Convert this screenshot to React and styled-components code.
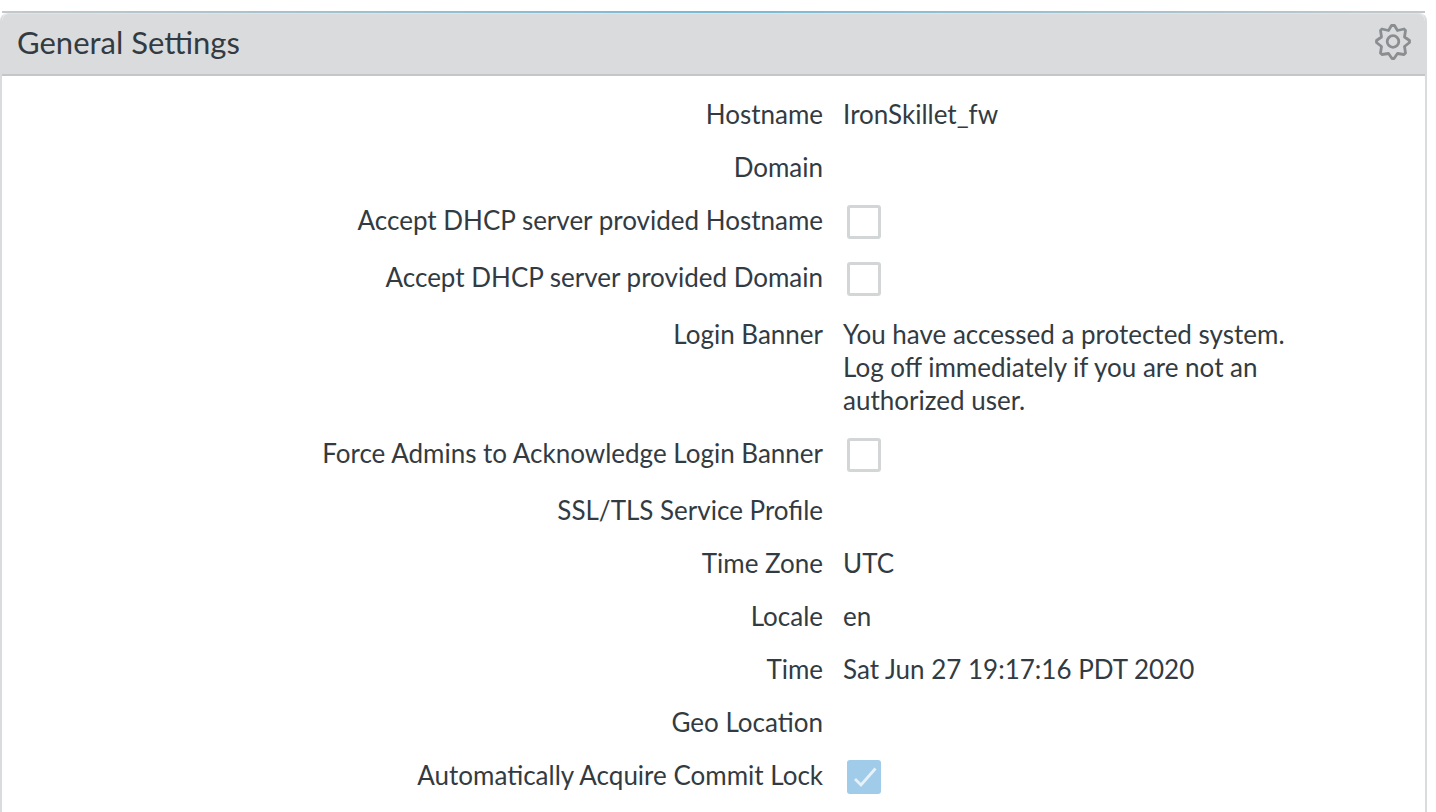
import React, { useState } from "react";
import styled, { createGlobalStyle } from "styled-components";

const GlobalStyle = createGlobalStyle`
  *, *::before, *::after { box-sizing: border-box; }
  body {
    margin: 0;
    background: #ffffff;
    color: #333b42;
    font-family: Lato, "Liberation Sans", sans-serif;
  }
`;

const Page = styled.main`
  padding: 11px 9px 0 0;
`;

const AccentLine = styled.div`
  height: 2px;
  margin: 0 2px;
  background: linear-gradient(to right, #c4c8cb 0%, #78bad3 50%, #c4c8cb 100%);
`;

const Panel = styled.section`
  border: 2px solid #dadbdd;
  border-top: 0;
  border-bottom: 0;
  border-radius: 8px 8px 0 0;
`;

const PanelHeader = styled.header`
  display: flex;
  align-items: center;
  justify-content: space-between;
  height: 63px;
  padding: 0 14px 3px 15px;
  background: #dadbdd;
  border-bottom: 2px solid #c4c6c9;
  border-radius: 8px 8px 0 0;
  box-shadow: inset 0 1px 0 #e2e3e5;
`;

const Title = styled.h1`
  margin: 0;
  font-size: 31px;
  line-height: 38px;
  font-weight: 400;
`;

const IconButton = styled.button`
  display: flex;
  padding: 0;
  border: 0;
  background: none;
  color: #8b8e91;
  cursor: pointer;
`;

const Settings = styled.div`
  display: flex;
  flex-direction: column;
  gap: 20px;
  padding: 22px 57px 24px 0;
`;

const Row = styled.div`
  display: grid;
  grid-template-columns: 61fr 39fr;
  column-gap: 20px;
  font-size: 26px;
  line-height: 33px;
`;

const Name = styled.span`
  text-align: right;
`;

const Value = styled.span`
  min-width: 0;
  max-width: 470px;
`;

const BoxFrame = styled.span`
  display: grid;
  width: 34px;
  margin: 1px 0 2px 4px;

  & > * { grid-area: 1 / 1; }
`;

const Checkbox = styled.input`
  appearance: none;
  width: 34px;
  height: 34px;
  margin: 0;
  border: 3px solid #d3d6d7;
  border-radius: 3px;
  background: #ffffff;

  &:checked {
    border-color: #a0cbe9;
    background: #a0cbe9;
  }
`;

const Tick = styled.svg`
  pointer-events: none;
`;

function GearIcon() {
  return (
    <svg width="36" height="36" viewBox="0 0 36 36" fill="none" stroke="currentColor" strokeWidth="2.8" strokeLinejoin="round" aria-hidden="true">
      <path d="M16.500 1.500h3L22.500 6.500 29 5 30.500 6.500 29.500 13 34.500 16.500v2L29.500 22.500 30.500 29 29 30.500 22.500 29.500 19 34.500h-2L13.500 29.500 7 30.500 5.500 29 6.500 22.500 1.500 18.500v-2L6.500 13 5.500 6.500 7 5 13.500 6.500z" />
      <circle cx="18" cy="17.500" r="5.800" />
    </svg>
  );
}

const SETTINGS = [
  { name: "Hostname", value: "IronSkillet_fw" },
  { name: "Domain", value: "" },
  { name: "Accept DHCP server provided Hostname", checked: false },
  { name: "Accept DHCP server provided Domain", checked: false },
  {
    name: "Login Banner",
    value: "You have accessed a protected system. Log off immediately if you are not an authorized user.",
  },
  { name: "Force Admins to Acknowledge Login Banner", checked: false },
  { name: "SSL/TLS Service Profile", value: "" },
  { name: "Time Zone", value: "UTC" },
  { name: "Locale", value: "en" },
  { name: "Time", value: "Sat Jun 27 19:17:16 PDT 2020" },
  { name: "Geo Location", value: "" },
  { name: "Automatically Acquire Commit Lock", checked: true },
];

function ToggleRow({ name, initial, id }) {
  const [on, setOn] = useState(initial);
  return (
    <Row>
      <Name as="label" htmlFor={id}>{name}</Name>
      <BoxFrame>
        <Checkbox id={id} type="checkbox" checked={on} onChange={(e) => setOn(e.target.checked)} />
        {on && (
          <Tick width="34" height="34" viewBox="0 0 34 34" fill="none" stroke="#e6f1fa" strokeWidth="2.800" aria-hidden="true">
            <path d="M8 19l6 6L28.500 8.500" />
          </Tick>
        )}
      </BoxFrame>
    </Row>
  );
}

export default function App() {
  return (
    <Page>
      <GlobalStyle />
      <AccentLine />
      <Panel>
        <PanelHeader>
          <Title>General Settings</Title>
          <IconButton type="button" aria-label="Edit general settings">
            <GearIcon />
          </IconButton>
        </PanelHeader>
        <Settings>
          {SETTINGS.map((s, i) =>
            s.checked === undefined ? (
              <Row key={s.name}>
                <Name>{s.name}</Name>
                <Value>{s.value}</Value>
              </Row>
            ) : (
              <ToggleRow key={s.name} id={`setting-${i}`} name={s.name} initial={s.checked} />
            )
          )}
        </Settings>
      </Panel>
    </Page>
  );
}
